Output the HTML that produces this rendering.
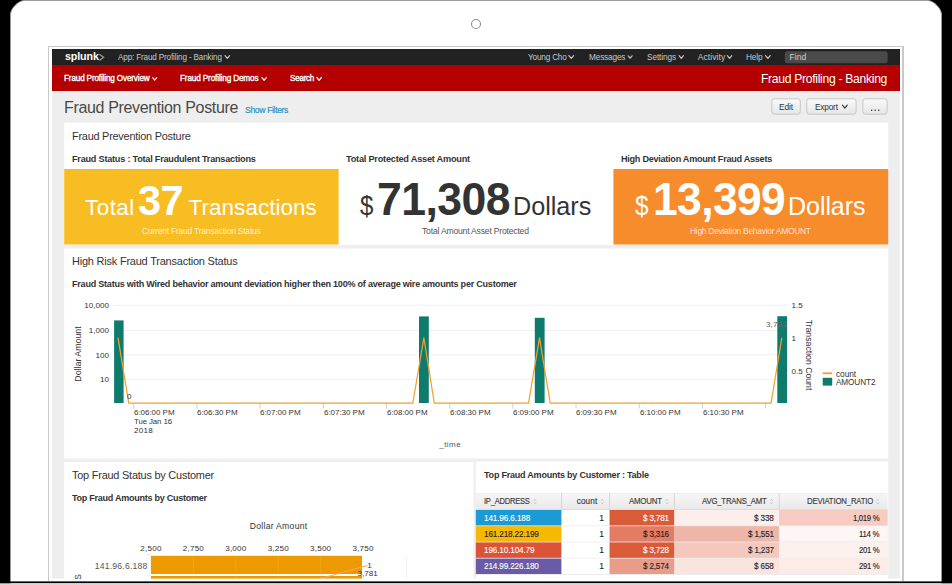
<!DOCTYPE html>
<html><head><meta charset="utf-8"><title>Fraud Prevention Posture</title>
<style>
*{margin:0;padding:0;box-sizing:border-box}
html,body{width:952px;height:585px;overflow:hidden;background:#000}
body{position:relative;font-family:"Liberation Sans",sans-serif;color:#333}
.a{position:absolute}
.t{position:absolute;white-space:pre;line-height:1}
</style></head><body>
<svg class="a" style="left:0;top:0" width="952" height="585" viewBox="0 0 952 585"><path d="M10.5,585 L10.5,14.5 C10.5,8.5 18.5,0.5 24.5,0.5 L927.5,0.5 C933.5,0.5 941.5,8.5 941.5,14.5 L941.5,585 Z" fill="#ffffff" stroke="#9b9b9b" stroke-width="1"/><circle cx="476" cy="24" r="4.5" fill="#fff" stroke="#8e8e8e" stroke-width="1.1"/><rect x="48.00" y="46.00" width="856.00" height="535.00" fill="#c9c9c9" /><rect x="49.00" y="47.00" width="853.00" height="534.00" fill="#ffffff" /><rect x="52.00" y="49.00" width="848.00" height="530.00" fill="#eeeeee" /><rect x="52.00" y="49.00" width="848.00" height="16.00" fill="#222222" /><rect x="52.00" y="65.00" width="848.00" height="26.00" fill="#b40000" /><polyline points="99.4,54.2 103.6,57.3 99.4,60.4" fill="none" stroke="#9a9a9a" stroke-width="1.3"/><polyline points="225.00,55.60 227.30,58.40 229.60,55.60" fill="none" stroke="#c8c8c8" stroke-width="1.2" stroke-linecap="round" stroke-linejoin="round"/><polyline points="568.90,55.57 571.25,58.43 573.60,55.57" fill="none" stroke="#c8c8c8" stroke-width="1.2" stroke-linecap="round" stroke-linejoin="round"/><polyline points="628.20,55.77 630.15,58.23 632.10,55.77" fill="none" stroke="#c8c8c8" stroke-width="1.2" stroke-linecap="round" stroke-linejoin="round"/><polyline points="679.10,55.67 681.25,58.33 683.40,55.67" fill="none" stroke="#c8c8c8" stroke-width="1.2" stroke-linecap="round" stroke-linejoin="round"/><polyline points="727.40,55.65 729.60,58.35 731.80,55.65" fill="none" stroke="#c8c8c8" stroke-width="1.2" stroke-linecap="round" stroke-linejoin="round"/><polyline points="765.50,55.58 767.85,58.42 770.20,55.58" fill="none" stroke="#c8c8c8" stroke-width="1.2" stroke-linecap="round" stroke-linejoin="round"/><rect x="784.80" y="51.30" width="102.80" height="11.90" fill="#4a4a4a" rx="2.5"/><polyline points="152.70,77.65 154.70,80.15 156.70,77.65" fill="none" stroke="#ffffff" stroke-width="1.2" stroke-linecap="round" stroke-linejoin="round"/><polyline points="261.90,77.55 264.10,80.25 266.30,77.55" fill="none" stroke="#ffffff" stroke-width="1.2" stroke-linecap="round" stroke-linejoin="round"/><polyline points="316.80,77.50 319.10,80.30 321.40,77.50" fill="none" stroke="#ffffff" stroke-width="1.2" stroke-linecap="round" stroke-linejoin="round"/><defs><linearGradient id="bg" x1="0" y1="0" x2="0" y2="1"><stop offset="0" stop-color="#fafafa"/><stop offset="1" stop-color="#e6e6e6"/></linearGradient></defs><rect x="771.80" y="98.8" width="28.50" height="15.4" rx="2.5" fill="url(#bg)" stroke="#c6c6c6" stroke-width="1"/><rect x="806.70" y="98.8" width="49.40" height="15.4" rx="2.5" fill="url(#bg)" stroke="#c6c6c6" stroke-width="1"/><rect x="862.90" y="98.8" width="24.20" height="15.4" rx="2.5" fill="url(#bg)" stroke="#c6c6c6" stroke-width="1"/><polyline points="842.50,105.17 844.85,108.03 847.20,105.17" fill="none" stroke="#333" stroke-width="1.2" stroke-linecap="round" stroke-linejoin="round"/><rect x="871.00" y="109.6" width="1.3" height="1.3" fill="#333"/><rect x="874.50" y="109.6" width="1.3" height="1.3" fill="#333"/><rect x="878.00" y="109.6" width="1.3" height="1.3" fill="#333"/><rect x="64.20" y="122.70" width="824.00" height="122.20" fill="#ffffff" /><rect x="64.20" y="169.00" width="274.40" height="75.50" fill="#f8bd22" /><rect x="613.40" y="169.00" width="274.80" height="75.50" fill="#f68c2c" /><rect x="64.20" y="248.40" width="824.00" height="210.20" fill="#ffffff" /><rect x="113.00" y="304.70" width="674.20" height="1.00" fill="#efefef" /><rect x="113.00" y="330.10" width="674.20" height="1.00" fill="#efefef" /><rect x="113.00" y="354.40" width="674.20" height="1.00" fill="#efefef" /><rect x="113.00" y="378.80" width="674.20" height="1.00" fill="#efefef" /><rect x="133.30" y="403.50" width="1.00" height="5.00" fill="#d0d0d0" /><rect x="196.48" y="403.50" width="1.00" height="5.00" fill="#d0d0d0" /><rect x="259.66" y="403.50" width="1.00" height="5.00" fill="#d0d0d0" /><rect x="322.84" y="403.50" width="1.00" height="5.00" fill="#d0d0d0" /><rect x="386.02" y="403.50" width="1.00" height="5.00" fill="#d0d0d0" /><rect x="449.20" y="403.50" width="1.00" height="5.00" fill="#d0d0d0" /><rect x="512.38" y="403.50" width="1.00" height="5.00" fill="#d0d0d0" /><rect x="575.56" y="403.50" width="1.00" height="5.00" fill="#d0d0d0" /><rect x="638.74" y="403.50" width="1.00" height="5.00" fill="#d0d0d0" /><rect x="701.92" y="403.50" width="1.00" height="5.00" fill="#d0d0d0" /><rect x="765.10" y="403.50" width="1.00" height="5.00" fill="#d0d0d0" /><rect x="114.10" y="320.40" width="9.50" height="82.60" fill="#0f7b6d" /><rect x="419.00" y="316.40" width="9.80" height="86.60" fill="#0f7b6d" /><rect x="534.80" y="317.80" width="9.80" height="85.20" fill="#0f7b6d" /><rect x="777.30" y="316.20" width="9.80" height="86.80" fill="#0f7b6d" /><polyline points="118.00,337.60 128.70,403.00 412.80,403.00 423.90,337.90 434.30,403.00 528.60,403.00 539.50,337.90 550.20,403.00 771.10,403.00 781.80,337.80" fill="none" stroke="#f0a02c" stroke-width="1.25" stroke-linejoin="round"/><rect x="822.70" y="372.40" width="9.50" height="1.80" fill="#f0a02c" /><rect x="822.70" y="377.80" width="9.50" height="7.80" fill="#0f7b6d" /><rect x="64.20" y="462.10" width="409.30" height="116.90" fill="#ffffff" /><rect x="150.90" y="555.80" width="211.10" height="18.20" fill="#ed9a00" /><rect x="150.90" y="576.00" width="211.10" height="3.00" fill="#ed9a00" /><rect x="192.82" y="555.80" width="1.00" height="23.20" fill="rgba(255,255,255,0.10)" /><rect x="235.24" y="555.80" width="1.00" height="23.20" fill="rgba(255,255,255,0.10)" /><rect x="277.66" y="555.80" width="1.00" height="23.20" fill="rgba(255,255,255,0.10)" /><rect x="320.08" y="555.80" width="1.00" height="23.20" fill="rgba(255,255,255,0.10)" /><rect x="362.50" y="555.80" width="1.00" height="23.20" fill="rgba(255,255,255,0.10)" /><rect x="405.90" y="555.00" width="1.00" height="24.00" fill="#f3f3f3" /><rect x="147.50" y="554.30" width="3.40" height="0.80" fill="#dddddd" /><rect x="147.50" y="574.60" width="3.40" height="0.80" fill="#dddddd" /><line x1="317.5" y1="579.5" x2="367.2" y2="565.5" stroke="#f7a46a" stroke-width="1.2"/><rect x="475.80" y="461.50" width="412.40" height="117.50" fill="#ffffff" /><defs><linearGradient id="hg" x1="0" y1="0" x2="0" y2="1"><stop offset="0" stop-color="#f6f6f6"/><stop offset="1" stop-color="#e9e9e9"/></linearGradient></defs><rect x="475.80" y="493.20" width="411.80" height="16.40" fill="url(#hg)" /><rect x="475.80" y="493.00" width="411.80" height="0.50" fill="#e6e6e6" /><rect x="475.80" y="509.20" width="411.80" height="0.80" fill="#d8d8d8" /><rect x="561.10" y="493.20" width="1.00" height="16.40" fill="#d6d6d6" /><rect x="609.10" y="493.20" width="1.00" height="16.40" fill="#d6d6d6" /><rect x="673.90" y="493.20" width="1.00" height="16.40" fill="#d6d6d6" /><rect x="778.70" y="493.20" width="1.00" height="16.40" fill="#d6d6d6" /><path d="M533.70,500.9 L535.00,499.4 L536.30,500.9 M533.70,502.4 L535.00,503.9 L536.30,502.4" fill="none" stroke="#b8b8b8" stroke-width="0.7"/><path d="M601.00,500.9 L602.30,499.4 L603.60,500.9 M601.00,502.4 L602.30,503.9 L603.60,502.4" fill="none" stroke="#b8b8b8" stroke-width="0.7"/><path d="M665.70,500.9 L667.00,499.4 L668.30,500.9 M665.70,502.4 L667.00,503.9 L668.30,502.4" fill="none" stroke="#b8b8b8" stroke-width="0.7"/><path d="M770.20,500.9 L771.50,499.4 L772.80,500.9 M770.20,502.4 L771.50,503.9 L772.80,502.4" fill="none" stroke="#b8b8b8" stroke-width="0.7"/><path d="M876.50,500.9 L877.80,499.4 L879.10,500.9 M876.50,502.4 L877.80,503.9 L879.10,502.4" fill="none" stroke="#b8b8b8" stroke-width="0.7"/><rect x="475.80" y="510.00" width="411.80" height="16.20" fill="#e9e9e9" /><rect x="475.80" y="510.00" width="85.80" height="15.40" fill="#1b9ad6" /><rect x="561.60" y="510.00" width="48.00" height="15.40" fill="#ffffff" /><rect x="609.60" y="510.00" width="64.80" height="15.40" fill="#d95b37" /><rect x="674.40" y="510.00" width="104.80" height="15.40" fill="#fcefeb" /><rect x="779.20" y="510.00" width="108.40" height="15.40" fill="#f6ccc2" /><rect x="475.80" y="526.20" width="411.80" height="16.20" fill="#e9e9e9" /><rect x="475.80" y="526.20" width="85.80" height="15.40" fill="#f7b800" /><rect x="561.60" y="526.20" width="48.00" height="15.40" fill="#ffffff" /><rect x="609.60" y="526.20" width="64.80" height="15.40" fill="#e47b65" /><rect x="674.40" y="526.20" width="104.80" height="15.40" fill="#efb5a7" /><rect x="779.20" y="526.20" width="108.40" height="15.40" fill="#fef6f4" /><rect x="475.80" y="542.40" width="411.80" height="16.20" fill="#e9e9e9" /><rect x="475.80" y="542.40" width="85.80" height="15.40" fill="#dc5437" /><rect x="561.60" y="542.40" width="48.00" height="15.40" fill="#ffffff" /><rect x="609.60" y="542.40" width="64.80" height="15.40" fill="#d95b37" /><rect x="674.40" y="542.40" width="104.80" height="15.40" fill="#f4c8bd" /><rect x="779.20" y="542.40" width="108.40" height="15.40" fill="#fdf1ee" /><rect x="475.80" y="558.60" width="411.80" height="16.20" fill="#e9e9e9" /><rect x="475.80" y="558.60" width="85.80" height="15.40" fill="#6b5aa5" /><rect x="561.60" y="558.60" width="48.00" height="15.40" fill="#ffffff" /><rect x="609.60" y="558.60" width="64.80" height="15.40" fill="#e89c89" /><rect x="674.40" y="558.60" width="104.80" height="15.40" fill="#fae4de" /><rect x="779.20" y="558.60" width="108.40" height="15.40" fill="#fcebe6" /><rect x="49.00" y="578.60" width="853.00" height="2.80" fill="#ffffff" /><rect x="0.00" y="581.40" width="952.00" height="1.90" fill="#000000" /><rect x="0.00" y="583.30" width="952.00" height="1.70" fill="#d8d8d8" /></svg>
<span class="t" style="left:64.53px;top:51px;font-size:11px;font-weight:700;color:#ffffff;letter-spacing:-0.128px;transform:scaleX(0.9724);transform-origin:0 0;">splunk</span>
<span class="t" style="left:118.32px;top:53px;font-size:8.6px;color:#c8c8c8;letter-spacing:-0.151px;transform:scaleX(0.9429);transform-origin:0 0;">App: Fraud Profiling - Banking</span>
<span class="t" style="left:527.71px;top:53px;font-size:8.6px;color:#c8c8c8;letter-spacing:-0.175px;transform:scaleX(0.9499);transform-origin:0 0;">Young Cho</span>
<span class="t" style="left:588.61px;top:53px;font-size:8.6px;color:#c8c8c8;letter-spacing:-0.156px;transform:scaleX(0.9579);transform-origin:0 0;">Messages</span>
<span class="t" style="left:646.81px;top:53px;font-size:8.6px;color:#c8c8c8;letter-spacing:-0.114px;transform:scaleX(0.9609);transform-origin:0 0;">Settings</span>
<span class="t" style="left:697.70px;top:53px;font-size:8.6px;color:#c8c8c8;letter-spacing:0.040px;">Activity</span>
<span class="t" style="left:746.41px;top:53px;font-size:8.6px;color:#c8c8c8;letter-spacing:-0.148px;transform:scaleX(0.9614);transform-origin:0 0;">Help</span>
<span class="t" style="left:789.50px;top:53px;font-size:8.6px;color:#cfcfcf;">Find</span>
<span class="t" style="left:63.91px;top:74px;font-size:8.7px;color:#ffffff;letter-spacing:-0.169px;transform:scaleX(0.9390);transform-origin:0 0;-webkit-text-stroke:0.35px #fff;">Fraud Profiling Overview</span>
<span class="t" style="left:180.41px;top:74px;font-size:8.7px;color:#ffffff;letter-spacing:-0.161px;transform:scaleX(0.9442);transform-origin:0 0;-webkit-text-stroke:0.35px #fff;">Fraud Profiling Demos</span>
<span class="t" style="left:289.72px;top:74px;font-size:8.7px;color:#ffffff;letter-spacing:-0.259px;transform:scaleX(0.9287);transform-origin:0 0;-webkit-text-stroke:0.35px #fff;">Search</span>
<span class="t" style="left:761.07px;top:72px;font-size:13.2px;color:#ffffff;letter-spacing:-0.325px;transform:scaleX(0.9200);transform-origin:0 0;">Fraud Profiling - Banking</span>
<span class="t" style="left:63.94px;top:99px;font-size:17.1px;color:#484848;letter-spacing:-0.367px;transform:scaleX(0.9354);transform-origin:0 0;">Fraud Prevention Posture</span>
<span class="t" style="left:245.00px;top:105px;font-size:9.9px;color:#1e93c6;letter-spacing:-0.421px;transform:scaleX(0.8734);transform-origin:0 0;-webkit-text-stroke:0.2px #1e93c6;">Show Filters</span>
<span class="t" style="left:778.71px;top:103px;font-size:8.9px;letter-spacing:-0.174px;transform:scaleX(0.9470);transform-origin:0 0;">Edit</span>
<span class="t" style="left:814.61px;top:103px;font-size:8.9px;letter-spacing:-0.218px;transform:scaleX(0.9355);transform-origin:0 0;">Export</span>
<span class="t" style="left:71.92px;top:130px;font-size:11.6px;letter-spacing:-0.237px;transform:scaleX(0.9384);transform-origin:0 0;">Fraud Prevention Posture</span>
<span class="t" style="left:71.58px;top:154px;font-size:9.9px;font-weight:700;letter-spacing:-0.247px;transform:scaleX(0.9247);transform-origin:0 0;">Fraud Status : Total Fraudulent Transactions</span>
<span class="t" style="left:346.48px;top:154px;font-size:9.9px;font-weight:700;letter-spacing:-0.244px;transform:scaleX(0.9299);transform-origin:0 0;">Total Protected Asset Amount</span>
<span class="t" style="left:621.08px;top:154px;font-size:9.9px;font-weight:700;letter-spacing:-0.284px;transform:scaleX(0.9200);transform-origin:0 0;">High Deviation Amount Fraud Assets</span>
<span class="t" style="left:85.11px;top:197px;font-size:22.5px;color:#fff;letter-spacing:0.411px;">Total</span>
<span class="t" style="left:138.35px;top:180px;font-size:42.4px;font-weight:700;color:#fff;letter-spacing:-0.642px;transform:scaleX(0.9783);transform-origin:0 0;">37</span>
<span class="t" style="left:188.61px;top:197px;font-size:22.5px;color:#fff;letter-spacing:0.019px;">Transactions</span>
<span class="t" style="left:141.50px;top:227px;font-size:9.3px;color:rgba(255,255,255,0.78);letter-spacing:-0.251px;transform:scaleX(0.9160);transform-origin:0 0;">Current Fraud Transaction Status</span>
<span class="t" style="left:360.06px;top:192px;font-size:27.5px;transform:scaleX(0.8750);transform-origin:0 0;">$</span>
<span class="t" style="left:376.94px;top:176px;font-size:46px;font-weight:700;letter-spacing:-0.584px;transform:scaleX(0.9683);transform-origin:0 0;">71,308</span>
<span class="t" style="left:513.02px;top:194px;font-size:25.3px;letter-spacing:-0.024px;transform:scaleX(0.9972);transform-origin:0 0;">Dollars</span>
<span class="t" style="left:422.30px;top:227px;font-size:9.3px;color:#555;letter-spacing:-0.222px;transform:scaleX(0.9267);transform-origin:0 0;">Total Amount Asset Protected</span>
<span class="t" style="left:634.64px;top:192px;font-size:27.5px;color:#fff;transform:scaleX(0.8899);transform-origin:0 0;">$</span>
<span class="t" style="left:652.75px;top:176px;font-size:46px;font-weight:700;color:#fff;letter-spacing:-0.634px;transform:scaleX(0.9656);transform-origin:0 0;">13,399</span>
<span class="t" style="left:788.02px;top:194px;font-size:25.3px;color:#fff;letter-spacing:-0.078px;transform:scaleX(0.9909);transform-origin:0 0;">Dollars</span>
<span class="t" style="left:689.70px;top:227px;font-size:9.3px;color:rgba(255,255,255,0.78);letter-spacing:-0.304px;transform:scaleX(0.9079);transform-origin:0 0;">High Deviation Behavior AMOUNT</span>
<span class="t" style="left:71.92px;top:255px;font-size:11.6px;letter-spacing:-0.208px;transform:scaleX(0.9439);transform-origin:0 0;">High Risk Fraud Transaction Status</span>
<span class="t" style="left:71.78px;top:279px;font-size:9.8px;font-weight:700;letter-spacing:-0.254px;transform:scaleX(0.9242);transform-origin:0 0;">Fraud Status with Wired behavior amount deviation higher then 100% of average wire amounts per Customer</span>
<span class="t" style="left:84.32px;top:302px;font-size:8.1px;">10,000</span>
<span class="t" style="left:88.82px;top:327px;font-size:8.1px;">1,000</span>
<span class="t" style="left:95.57px;top:352px;font-size:8.1px;">100</span>
<span class="t" style="left:100.07px;top:376px;font-size:8.1px;">10</span>
<span class="t" style="left:134.12px;top:409px;font-size:8.1px;letter-spacing:-0.038px;transform:scaleX(0.9876);transform-origin:0 0;">6:06:00 PM</span>
<span class="t" style="left:197.30px;top:409px;font-size:8.1px;letter-spacing:-0.038px;transform:scaleX(0.9876);transform-origin:0 0;">6:06:30 PM</span>
<span class="t" style="left:260.48px;top:409px;font-size:8.1px;letter-spacing:-0.038px;transform:scaleX(0.9876);transform-origin:0 0;">6:07:00 PM</span>
<span class="t" style="left:323.66px;top:409px;font-size:8.1px;letter-spacing:-0.038px;transform:scaleX(0.9876);transform-origin:0 0;">6:07:30 PM</span>
<span class="t" style="left:386.84px;top:409px;font-size:8.1px;letter-spacing:-0.038px;transform:scaleX(0.9876);transform-origin:0 0;">6:08:00 PM</span>
<span class="t" style="left:450.02px;top:409px;font-size:8.1px;letter-spacing:-0.038px;transform:scaleX(0.9876);transform-origin:0 0;">6:08:30 PM</span>
<span class="t" style="left:513.20px;top:409px;font-size:8.1px;letter-spacing:-0.038px;transform:scaleX(0.9876);transform-origin:0 0;">6:09:00 PM</span>
<span class="t" style="left:576.38px;top:409px;font-size:8.1px;letter-spacing:-0.038px;transform:scaleX(0.9876);transform-origin:0 0;">6:09:30 PM</span>
<span class="t" style="left:639.56px;top:409px;font-size:8.1px;letter-spacing:-0.038px;transform:scaleX(0.9876);transform-origin:0 0;">6:10:00 PM</span>
<span class="t" style="left:702.74px;top:409px;font-size:8.1px;letter-spacing:-0.038px;transform:scaleX(0.9876);transform-origin:0 0;">6:10:30 PM</span>
<span class="t" style="left:134.13px;top:418px;font-size:8.1px;letter-spacing:-0.097px;transform:scaleX(0.9673);transform-origin:0 0;">Tue Jan 16</span>
<span class="t" style="left:134.12px;top:427px;font-size:8.1px;letter-spacing:0.184px;">2018</span>
<span class="t" style="left:439.22px;top:441px;font-size:8px;color:#555;letter-spacing:0.474px;">_time</span>
<span class="t" style="left:127.02px;top:393px;font-size:8.1px;">0</span>
<span class="t" style="left:765.92px;top:321px;font-size:8.1px;color:#666;letter-spacing:0.200px;">3,781</span>
<span class="t" style="left:791.52px;top:302px;font-size:8.1px;">1.5</span>
<span class="t" style="left:791.52px;top:335px;font-size:8.1px;">1</span>
<span class="t" style="left:791.52px;top:368px;font-size:8.1px;">0.5</span>
<span class="t" style="left:836.41px;top:370px;font-size:8.4px;letter-spacing:-0.041px;transform:scaleX(0.9875);transform-origin:0 0;">count</span>
<span class="t" style="left:836.41px;top:378px;font-size:8.4px;letter-spacing:-0.099px;transform:scaleX(0.9781);transform-origin:0 0;">AMOUNT2</span>
<span class="t" style="left:72.02px;top:469px;font-size:11.6px;letter-spacing:-0.229px;transform:scaleX(0.9412);transform-origin:0 0;">Top Fraud Status by Customer</span>
<span class="t" style="left:72.08px;top:493px;font-size:9.8px;font-weight:700;letter-spacing:-0.288px;transform:scaleX(0.9224);transform-origin:0 0;">Top Fraud Amounts by Customer</span>
<span class="t" style="left:249.70px;top:522px;font-size:8.6px;letter-spacing:0.293px;">Dollar Amount</span>
<span class="t" style="left:140.37px;top:545px;font-size:8.1px;letter-spacing:0.200px;">2,500</span>
<span class="t" style="left:182.79px;top:545px;font-size:8.1px;letter-spacing:0.200px;">2,750</span>
<span class="t" style="left:225.21px;top:545px;font-size:8.1px;letter-spacing:0.200px;">3,000</span>
<span class="t" style="left:267.63px;top:545px;font-size:8.1px;letter-spacing:0.200px;">3,250</span>
<span class="t" style="left:310.05px;top:545px;font-size:8.1px;letter-spacing:0.200px;">3,500</span>
<span class="t" style="left:352.47px;top:545px;font-size:8.1px;letter-spacing:0.200px;">3,750</span>
<span class="t" style="left:94.70px;top:562px;font-size:8.6px;color:#555;letter-spacing:0.219px;">141.96.6.188</span>
<span class="t" style="left:367.32px;top:562px;font-size:8.1px;">1</span>
<span class="t" style="left:357.62px;top:570px;font-size:8.1px;">3,781</span>
<span class="t" style="left:483.98px;top:470px;font-size:9.8px;font-weight:700;letter-spacing:-0.267px;transform:scaleX(0.9239);transform-origin:0 0;">Top Fraud Amounts by Customer : Table</span>
<span class="t" style="left:483.73px;top:498px;font-size:8.2px;color:#3c3c3c;letter-spacing:-0.272px;transform:scaleX(0.9293);transform-origin:0 0;-webkit-text-stroke:0.15px #3c3c3c;">IP_ADDRESS</span>
<span class="t" style="left:576.71px;top:498px;font-size:8.2px;color:#3c3c3c;letter-spacing:0.136px;-webkit-text-stroke:0.15px #3c3c3c;">count</span>
<span class="t" style="left:628.73px;top:498px;font-size:8.2px;color:#3c3c3c;letter-spacing:-0.205px;transform:scaleX(0.9562);transform-origin:0 0;-webkit-text-stroke:0.15px #3c3c3c;">AMOUNT</span>
<span class="t" style="left:701.63px;top:498px;font-size:8.2px;color:#3c3c3c;letter-spacing:-0.204px;transform:scaleX(0.9483);transform-origin:0 0;-webkit-text-stroke:0.15px #3c3c3c;">AVG_TRANS_AMT</span>
<span class="t" style="left:806.93px;top:498px;font-size:8.2px;color:#3c3c3c;letter-spacing:-0.179px;transform:scaleX(0.9481);transform-origin:0 0;-webkit-text-stroke:0.15px #3c3c3c;">DEVIATION_RATIO</span>
<span class="t" style="left:483.71px;top:514px;font-size:8.6px;color:#fff;letter-spacing:-0.145px;transform:scaleX(0.9522);transform-origin:0 0;-webkit-text-stroke:0.12px #fff;">141.96.6.188</span>
<span class="t" style="left:599.22px;top:514px;font-size:8.6px;color:#222;-webkit-text-stroke:0.12px #222;">1</span>
<span class="t" style="left:643.02px;top:514px;font-size:8.6px;color:#fff;letter-spacing:-0.184px;transform:scaleX(0.9415);transform-origin:0 0;-webkit-text-stroke:0.12px #fff;">$ 3,781</span>
<span class="t" style="left:754.31px;top:514px;font-size:8.6px;color:#222;letter-spacing:-0.165px;transform:scaleX(0.9530);transform-origin:0 0;-webkit-text-stroke:0.12px #222;">$ 338</span>
<span class="t" style="left:853.33px;top:514px;font-size:8.6px;color:#222;letter-spacing:-0.340px;transform:scaleX(0.9029);transform-origin:0 0;-webkit-text-stroke:0.12px #222;">1,019 %</span>
<span class="t" style="left:483.71px;top:530px;font-size:8.6px;color:#222;letter-spacing:-0.153px;transform:scaleX(0.9500);transform-origin:0 0;-webkit-text-stroke:0.12px #222;">161.218.22.199</span>
<span class="t" style="left:599.22px;top:530px;font-size:8.6px;color:#222;-webkit-text-stroke:0.12px #222;">1</span>
<span class="t" style="left:643.02px;top:530px;font-size:8.6px;color:#222;letter-spacing:-0.184px;transform:scaleX(0.9415);transform-origin:0 0;-webkit-text-stroke:0.12px #222;">$ 3,316</span>
<span class="t" style="left:748.22px;top:530px;font-size:8.6px;color:#222;letter-spacing:-0.184px;transform:scaleX(0.9415);transform-origin:0 0;-webkit-text-stroke:0.12px #222;">$ 1,551</span>
<span class="t" style="left:859.42px;top:530px;font-size:8.6px;color:#222;letter-spacing:-0.327px;transform:scaleX(0.9164);transform-origin:0 0;-webkit-text-stroke:0.12px #222;">114 %</span>
<span class="t" style="left:483.71px;top:546px;font-size:8.6px;color:#fff;letter-spacing:-0.149px;transform:scaleX(0.9510);transform-origin:0 0;-webkit-text-stroke:0.12px #fff;">196.10.104.79</span>
<span class="t" style="left:599.22px;top:546px;font-size:8.6px;color:#222;-webkit-text-stroke:0.12px #222;">1</span>
<span class="t" style="left:643.02px;top:546px;font-size:8.6px;color:#fff;letter-spacing:-0.184px;transform:scaleX(0.9415);transform-origin:0 0;-webkit-text-stroke:0.12px #fff;">$ 3,728</span>
<span class="t" style="left:748.22px;top:546px;font-size:8.6px;color:#222;letter-spacing:-0.184px;transform:scaleX(0.9415);transform-origin:0 0;-webkit-text-stroke:0.12px #222;">$ 1,237</span>
<span class="t" style="left:859.43px;top:546px;font-size:8.6px;color:#222;letter-spacing:-0.397px;transform:scaleX(0.9015);transform-origin:0 0;-webkit-text-stroke:0.12px #222;">201 %</span>
<span class="t" style="left:483.71px;top:562px;font-size:8.6px;color:#fff;letter-spacing:-0.153px;transform:scaleX(0.9500);transform-origin:0 0;-webkit-text-stroke:0.12px #fff;">214.99.226.180</span>
<span class="t" style="left:599.22px;top:562px;font-size:8.6px;color:#222;-webkit-text-stroke:0.12px #222;">1</span>
<span class="t" style="left:643.02px;top:562px;font-size:8.6px;color:#222;letter-spacing:-0.184px;transform:scaleX(0.9415);transform-origin:0 0;-webkit-text-stroke:0.12px #222;">$ 2,574</span>
<span class="t" style="left:754.31px;top:562px;font-size:8.6px;color:#222;letter-spacing:-0.165px;transform:scaleX(0.9530);transform-origin:0 0;-webkit-text-stroke:0.12px #222;">$ 658</span>
<span class="t" style="left:859.43px;top:562px;font-size:8.6px;color:#222;letter-spacing:-0.397px;transform:scaleX(0.9015);transform-origin:0 0;-webkit-text-stroke:0.12px #222;">291 %</span>
<div class="a" style="left:0;top:0;width:952px;height:579px;overflow:hidden"><span class="t" style="left:77.5px;top:353.8px;font-size:8.8px;color:#333;transform:translate(-50%,-50%) rotate(-90deg)">Dollar Amount</span><span class="t" style="left:809.3px;top:354.6px;font-size:8.7px;color:#333;transform:translate(-50%,-50%) rotate(90deg)">Transaction Count</span><span class="t" style="left:77.5px;top:601.5px;font-size:8.8px;color:#333;transform:translate(-50%,-50%) rotate(-90deg)">IP_ADDRESS</span></div>
</body></html>
